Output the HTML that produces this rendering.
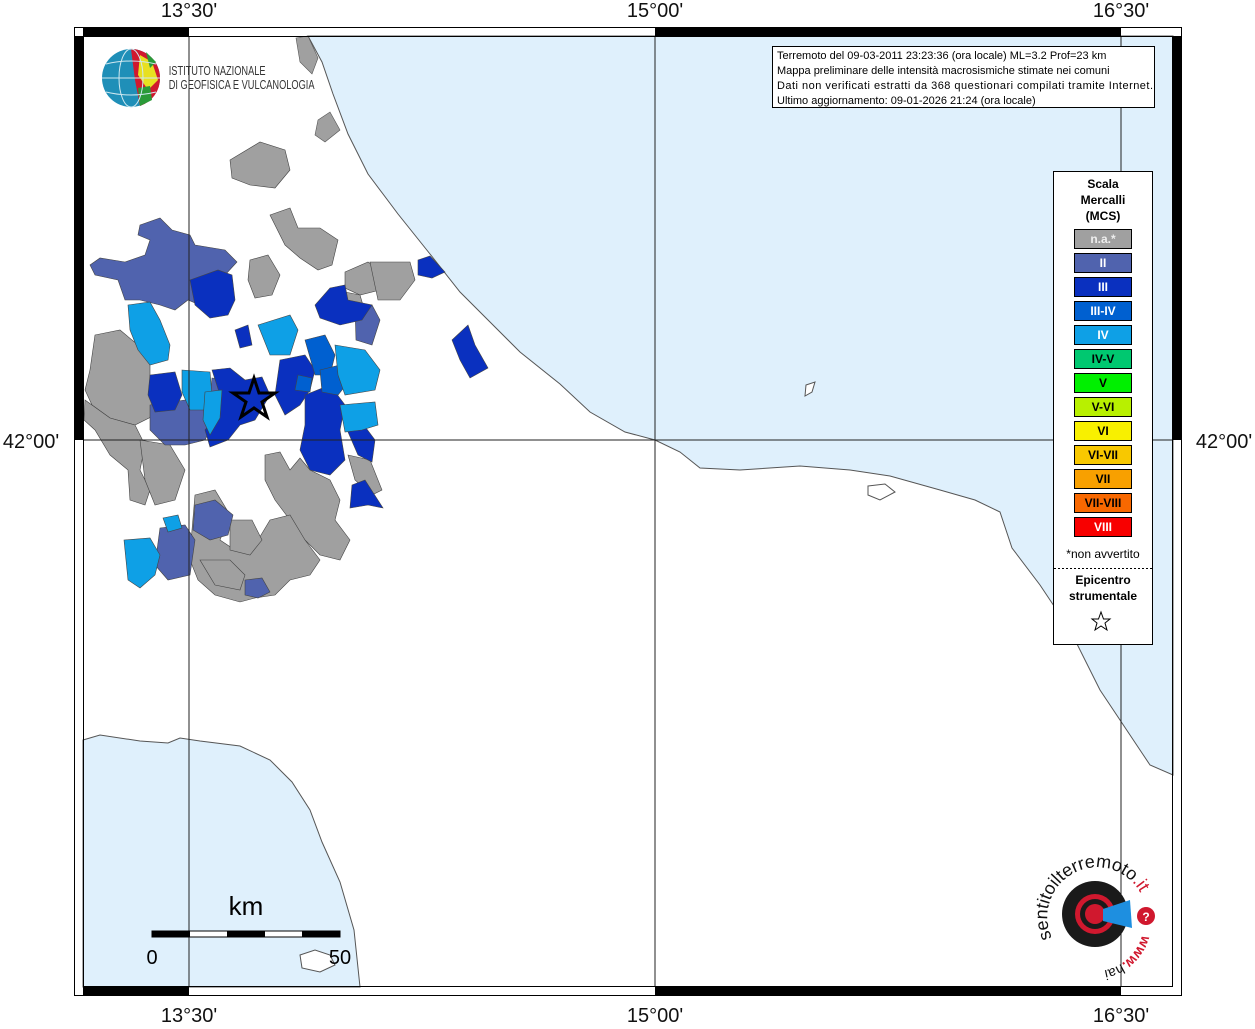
<!DOCTYPE html>
<html><head><meta charset="utf-8"><style>
body{margin:0;background:#fff;width:1255px;height:1024px;overflow:hidden;font-family:"Liberation Sans",sans-serif}
</style></head><body>
<svg width="1255" height="1024" viewBox="0 0 1255 1024" xmlns="http://www.w3.org/2000/svg" font-family="Liberation Sans, sans-serif">
<rect width="1255" height="1024" fill="#fff"/>
<path d="M308,36 L1173,36 L1173,775 L1150,765 L1130,735 L1100,690 L1070,630 L1040,585 L1012,548 L1000,512 L975,500 L940,490 L890,476 L850,470 L800,466 L740,470 L700,468 L680,452 L655,440 L625,432 L590,412 L560,384 L520,352 L490,322 L460,292 L430,254 L398,214 L368,174 L348,134 L333,94 L322,62 Z" fill="#dff0fc" stroke="#555" stroke-width="1"/>
<path d="M83,740 L100,735 L140,741 L168,743 L180,738 L200,741 L240,746 L270,760 L292,782 L310,810 L322,842 L340,882 L354,930 L360,987 L83,987 Z" fill="#dff0fc" stroke="#555" stroke-width="1"/>
<path d="M300,955 L315,950 L330,955 L335,965 L320,972 L302,968 Z" fill="#fff" stroke="#555"/>
<path d="M806,385 L815,382 L812,392 L805,396 Z" fill="#fff" stroke="#555"/>
<path d="M868,486 L885,484 L895,492 L880,500 L868,495 Z" fill="#fff" stroke="#555"/>
<path d="M296,38 L308,36 L318,58 L312,74 L300,62 Z" fill="#a0a0a0" stroke="#555" stroke-width=".6"/>
<path d="M318,120 L330,112 L340,130 L325,142 L315,135 Z" fill="#a0a0a0" stroke="#555" stroke-width=".6"/>
<g stroke="#444" stroke-width=".6">
<path d="M230,160 L260,142 L285,150 L290,170 L275,188 L250,185 L232,178 Z" fill="#a0a0a0"/>
<path d="M270,215 L290,208 L298,228 L320,228 L338,240 L332,265 L318,270 L300,258 L285,245 Z" fill="#a0a0a0"/>
<path d="M250,260 L268,255 L280,275 L272,295 L255,298 L248,280 Z" fill="#a0a0a0"/>
<path d="M345,272 L368,262 L382,272 L380,290 L360,295 L345,288 Z" fill="#a0a0a0"/>
<path d="M370,262 L410,262 L415,280 L400,300 L378,300 Z" fill="#a0a0a0"/>
<path d="M335,290 L360,295 L365,312 L345,318 L330,305 Z" fill="#a0a0a0"/>
<path d="M95,335 L120,330 L138,345 L150,360 L150,378 L160,395 L155,415 L135,425 L110,418 L92,405 L85,390 L90,370 Z" fill="#a0a0a0"/>
<path d="M85,400 L110,418 L135,425 L145,445 L140,470 L150,490 L145,505 L130,500 L128,470 L110,455 L95,430 L84,420 Z" fill="#a0a0a0"/>
<path d="M140,440 L170,445 L185,470 L175,500 L155,505 L145,480 Z" fill="#a0a0a0"/>
<path d="M265,455 L280,452 L290,470 L300,458 L310,470 L330,480 L340,500 L335,520 L350,540 L340,560 L320,555 L305,540 L290,520 L275,500 L265,480 Z" fill="#a0a0a0"/>
<path d="M348,455 L370,460 L382,490 L372,495 L355,480 Z" fill="#a0a0a0"/>
<path d="M195,495 L215,490 L230,515 L220,540 L235,550 L255,545 L270,520 L290,515 L305,540 L320,560 L310,575 L290,580 L275,595 L255,598 L240,602 L215,595 L198,580 L190,560 L192,530 Z" fill="#a0a0a0"/>
<path d="M230,520 L252,520 L262,540 L250,555 L230,550 Z" fill="#a0a0a0"/>
<path d="M200,560 L230,560 L245,575 L240,590 L215,585 Z" fill="none"/>
<path d="M140,225 L160,218 L172,230 L190,235 L195,245 L225,250 L237,262 L225,275 L215,300 L200,305 L188,300 L175,310 L160,305 L140,300 L125,300 L118,280 L95,275 L90,265 L100,258 L125,262 L145,255 L150,240 L138,235 Z" fill="#5063ae"/>
<path d="M150,405 L185,400 L205,405 L215,420 L205,440 L185,445 L165,445 L150,430 Z" fill="#5063ae"/>
<path d="M195,505 L215,500 L233,515 L228,535 L210,540 L193,530 Z" fill="#5063ae"/>
<path d="M160,528 L185,525 L195,540 L190,575 L168,580 L155,565 Z" fill="#5063ae"/>
<path d="M245,580 L262,578 L270,592 L258,598 L245,595 Z" fill="#5063ae"/>
<path d="M355,308 L372,305 L380,320 L372,345 L356,340 Z" fill="#5063ae"/>
<path d="M212,378 L235,380 L240,400 L225,410 L210,400 Z" fill="#5063ae"/>
<path d="M190,280 L218,270 L232,275 L235,300 L228,315 L210,318 L195,305 Z" fill="#0a30bf"/>
<path d="M235,330 L248,325 L252,345 L240,348 Z" fill="#0a30bf"/>
<path d="M150,375 L175,372 L182,395 L175,410 L155,412 L148,395 Z" fill="#0a30bf"/>
<path d="M212,370 L230,368 L245,380 L262,377 L270,395 L255,420 L240,425 L228,440 L210,447 L205,430 L218,415 L220,395 Z" fill="#0a30bf"/>
<path d="M330,288 L345,285 L348,300 L372,305 L362,320 L340,325 L320,318 L315,305 Z" fill="#0a30bf"/>
<path d="M280,360 L305,355 L315,370 L310,390 L300,405 L285,415 L275,395 Z" fill="#0a30bf"/>
<path d="M305,395 L330,385 L345,405 L340,430 L345,460 L330,475 L310,470 L300,450 L305,425 Z" fill="#0a30bf"/>
<path d="M345,425 L360,420 L375,440 L372,462 L358,455 Z" fill="#0a30bf"/>
<path d="M352,485 L365,480 L383,508 L368,505 L350,508 Z" fill="#0a30bf"/>
<path d="M418,260 L430,256 L445,272 L432,278 L418,275 Z" fill="#0a30bf"/>
<path d="M452,340 L468,325 L475,345 L488,368 L470,378 L460,360 Z" fill="#0a30bf"/>
<path d="M305,340 L325,335 L335,355 L330,375 L315,375 Z" fill="#0060d0"/>
<path d="M320,370 L340,365 L350,380 L338,395 L322,392 Z" fill="#0060d0"/>
<path d="M298,375 L312,378 L310,392 L295,390 Z" fill="#0060d0"/>
<path d="M128,305 L150,302 L160,320 L170,345 L168,360 L150,365 L138,350 L130,330 Z" fill="#0ea0e6"/>
<path d="M258,325 L290,315 L298,330 L290,355 L270,355 Z" fill="#0ea0e6"/>
<path d="M182,370 L210,372 L212,395 L205,410 L190,410 L182,392 Z" fill="#0ea0e6"/>
<path d="M205,392 L222,390 L220,418 L210,435 L203,420 Z" fill="#0ea0e6"/>
<path d="M335,345 L365,350 L380,370 L375,390 L345,395 L338,375 Z" fill="#0ea0e6"/>
<path d="M340,405 L375,402 L378,425 L362,430 L345,432 Z" fill="#0ea0e6"/>
<path d="M124,540 L150,538 L160,555 L155,575 L140,588 L128,580 Z" fill="#0ea0e6"/>
<path d="M163,518 L178,515 L182,528 L168,532 Z" fill="#0ea0e6"/>
</g>
<path d="M254,378 L259,393 L275,393 L262,402 L267,417 L254,408 L241,417 L246,402 L233,393 L249,393 Z" fill="none" stroke="#000" stroke-width="3"/>
<g stroke="#222" stroke-width="1">
<line x1="189" y1="36" x2="189" y2="987"/><line x1="655" y1="36" x2="655" y2="987"/><line x1="1121" y1="36" x2="1121" y2="987"/>
<line x1="83" y1="440" x2="1173" y2="440"/>
</g>
<rect x="74.5" y="27.5" width="1107" height="968" fill="none" stroke="#000"/>
<rect x="83.5" y="36.5" width="1089" height="950" fill="none" stroke="#000"/>
<rect x="83" y="27" width="106" height="9" fill="#000"/><rect x="655" y="27" width="466" height="9" fill="#000"/>
<rect x="83" y="987" width="106" height="9" fill="#000"/><rect x="655" y="987" width="466" height="9" fill="#000"/>
<rect x="74" y="36" width="9" height="404" fill="#000"/><rect x="1173" y="36" width="9" height="404" fill="#000"/>
<g font-size="20" fill="#111" text-anchor="middle">
<text x="189" y="17">13°30'</text><text x="655" y="17">15°00'</text><text x="1121" y="17">16°30'</text>
<text x="189" y="1022">13°30'</text><text x="655" y="1022">15°00'</text><text x="1121" y="1022">16°30'</text>
<text x="31" y="448">42°00'</text><text x="1224" y="448">42°00'</text>
</g>
<circle cx="131" cy="78" r="29" fill="#1f8fb8"/>
<path d="M131,49 A29,29 0 0 1 160,78 A29,29 0 0 1 140,106 L135,80 Z" fill="#d0182e"/>
<path d="M140,55 L152,62 L158,80 L148,90 L138,75 Z" fill="#e8e020"/>
<path d="M138,88 L150,86 L152,100 L140,106 Z" fill="#2a9a38"/>
<path d="M146,52 L156,62 L150,68 Z" fill="#2a9a38"/>
<g stroke="#cfe8f0" stroke-width="1" fill="none"><ellipse cx="131" cy="78" rx="12" ry="29"/><line x1="102" y1="78" x2="160" y2="78"/><path d="M106,64 Q131,58 156,64"/><path d="M106,92 Q131,98 156,92"/></g>
<g transform="scale(0.74,1)" fill="#333" font-size="12.5">
<text x="228" y="75">ISTITUTO NAZIONALE</text>
<text x="228" y="89">DI GEOFISICA E VULCANOLOGIA</text>
</g>
<rect x="772.5" y="46.5" width="382" height="61" fill="#fff" stroke="#000"/>
<g font-size="11" fill="#000">
<text x="777" y="59">Terremoto del 09-03-2011 23:23:36 (ora locale) ML=3.2 Prof=23 km</text>
<text x="777" y="74">Mappa preliminare delle intensità macrosismiche stimate nei comuni</text>
<text x="777" y="89" textLength="376">Dati non verificati estratti da 368 questionari compilati tramite Internet.</text>
<text x="777" y="104">Ultimo aggiornamento: 09-01-2026 21:24 (ora locale)</text>
</g>
<rect x="1053.5" y="171.5" width="99" height="473" fill="#fff" stroke="#000"/>
<g font-size="12" font-weight="bold" text-anchor="middle" fill="#000">
<text x="1103" y="188">Scala</text><text x="1103" y="204">Mercalli</text><text x="1103" y="220">(MCS)</text>
</g>
<g stroke="#000" stroke-width="1">
<rect x="1074.5" y="229.5" width="57" height="19" fill="#a0a0a0"/>
<rect x="1074.5" y="253.5" width="57" height="19" fill="#5063ae"/>
<rect x="1074.5" y="277.5" width="57" height="19" fill="#0a30bf"/>
<rect x="1074.5" y="301.5" width="57" height="19" fill="#0060d0"/>
<rect x="1074.5" y="325.5" width="57" height="19" fill="#0ea0e6"/>
<rect x="1074.5" y="349.5" width="57" height="19" fill="#00c870"/>
<rect x="1074.5" y="373.5" width="57" height="19" fill="#00f000"/>
<rect x="1074.5" y="397.5" width="57" height="19" fill="#b8f000"/>
<rect x="1074.5" y="421.5" width="57" height="19" fill="#f8f000"/>
<rect x="1074.5" y="445.5" width="57" height="19" fill="#f8c800"/>
<rect x="1074.5" y="469.5" width="57" height="19" fill="#f8a000"/>
<rect x="1074.5" y="493.5" width="57" height="19" fill="#f86800"/>
<rect x="1074.5" y="517.5" width="57" height="19" fill="#f80000"/>
</g>
<g font-size="12" font-weight="bold" text-anchor="middle">
<text x="1103" y="243" fill="#eee">n.a.*</text>
<text x="1103" y="267" fill="#fff">II</text>
<text x="1103" y="291" fill="#fff">III</text>
<text x="1103" y="315" fill="#fff">III-IV</text>
<text x="1103" y="339" fill="#fff">IV</text>
<text x="1103" y="363" fill="#000">IV-V</text>
<text x="1103" y="387" fill="#000">V</text>
<text x="1103" y="411" fill="#000">V-VI</text>
<text x="1103" y="435" fill="#000">VI</text>
<text x="1103" y="459" fill="#000">VI-VII</text>
<text x="1103" y="483" fill="#000">VII</text>
<text x="1103" y="507" fill="#000">VII-VIII</text>
<text x="1103" y="531" fill="#fff">VIII</text>
</g>
<text x="1103" y="558" font-size="12" text-anchor="middle">*non avvertito</text>
<line x1="1054" y1="568.5" x2="1152" y2="568.5" stroke="#000" stroke-dasharray="2,2"/>
<text x="1103" y="584" font-size="12" font-weight="bold" text-anchor="middle">Epicentro</text>
<text x="1103" y="600" font-size="12" font-weight="bold" text-anchor="middle">strumentale</text>
<path d="M1101,612 L1103.5,619 L1110,619 L1105,623 L1107,630 L1101,626 L1095,630 L1097,623 L1092,619 L1098.5,619 Z" fill="none" stroke="#000"/>
<text x="246" y="915" font-size="26" text-anchor="middle">km</text>
<rect x="152" y="931" width="188" height="6" fill="#fff" stroke="#000"/>
<rect x="152" y="931" width="38" height="6" fill="#000"/><rect x="227" y="931" width="38" height="6" fill="#000"/><rect x="302" y="931" width="38" height="6" fill="#000"/>
<text x="152" y="964" font-size="20" text-anchor="middle">0</text><text x="340" y="964" font-size="20" text-anchor="middle">50</text>
<circle cx="1095" cy="914" r="33" fill="#1a1a1a"/>
<circle cx="1095" cy="914" r="20" fill="#d0182e"/>
<circle cx="1095" cy="914" r="15" fill="#1a1a1a"/>
<circle cx="1095" cy="914" r="10" fill="#d0182e"/>
<path d="M1103,909 L1130,900 L1132,928 L1103,921 Z" fill="#1e8fe0"/>
<circle cx="1146" cy="916" r="9" fill="#d0182e"/>
<text x="1146" y="921" font-size="12" font-weight="bold" fill="#fff" text-anchor="middle">?</text>
<path id="arc" d="M1052,938 A46,46 0 1 1 1142,896" fill="none"/>
<text font-size="18" fill="#111"><textPath href="#arc">sentitoilterremoto<tspan fill="#d0182e">.it</tspan></textPath></text>
<path id="arc2" d="M1142,935 A48,48 0 0 1 1085,970" fill="none"/>
<text font-size="14" font-weight="bold" fill="#d0182e"><textPath href="#arc2">www.<tspan fill="#111" font-weight="normal">hai</tspan></textPath></text>
</svg>
</body></html>
